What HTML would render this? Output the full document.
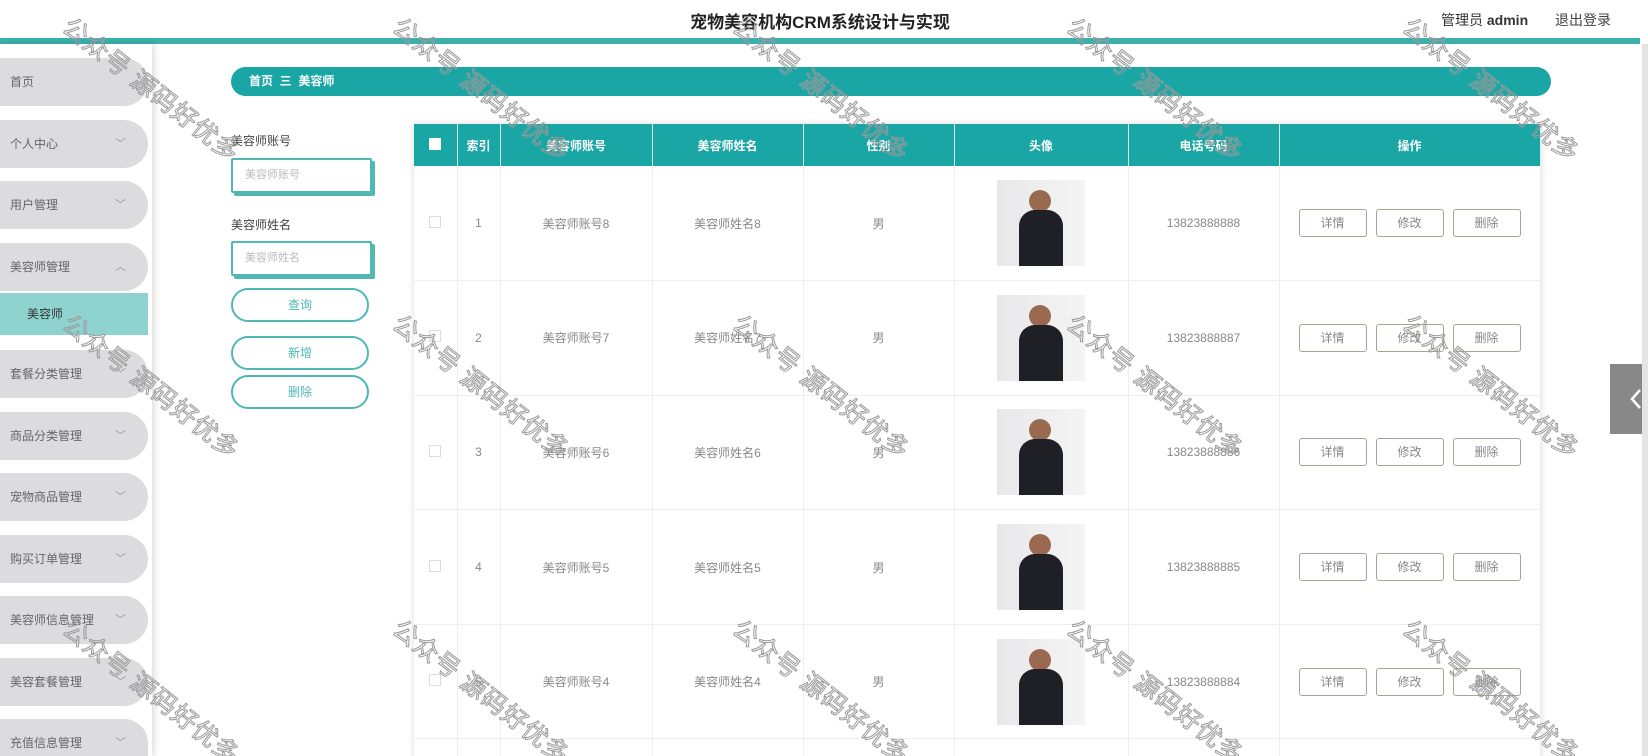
<!DOCTYPE html><html><head><meta charset="utf-8"><style>
*{margin:0;padding:0;box-sizing:border-box}
html,body{width:1648px;height:756px;overflow:hidden}
body{background:#fff;font-family:"Liberation Sans","Noto Sans CJK SC",sans-serif;color:#555}
#w{position:relative;width:1648px;height:756px;overflow:hidden}
.a{position:absolute}
.title{left:0;width:1640px;top:8px;text-align:center;font-size:17px;font-weight:bold;color:#222}
.bar{left:0;top:38px;width:1640px;height:6px;background:#3bb0ac}
.side{left:0;top:44px;width:152px;height:712px;background:#fff;box-shadow:3px 0 6px rgba(0,0,0,.12)}
.it{left:0;width:148px;height:48px;background:#dcdbdd;border-radius:0 24px 24px 0;font-size:12px;color:#666;padding-left:10px;line-height:48px}
.it i{position:absolute;right:22px;top:0;font-style:normal;font-size:11px;color:#999}
.sub{left:0;top:293px;width:148px;height:42px;background:#8fd3d0;font-size:12px;color:#333;padding-left:27px;line-height:42px}
.crumb{left:231px;top:67px;width:1320px;height:29px;background:#1aa6a5;border-radius:15px;color:#fff;font-size:12px;font-weight:bold;padding-left:18px;line-height:29px}
.lbl{left:231px;font-size:12px;color:#444}
.inp{left:231px;width:141px;height:35px;border:2px solid #4fb8b3;box-shadow:3px 3px 0 #4fb8b3;border-radius:2px;font-size:11px;color:#bbb;padding-left:12px;line-height:31px}
.btn{left:231px;width:138px;height:34px;border:2px solid #4fb8b3;border-radius:17px;text-align:center;font-size:12px;color:#4fb8b3;line-height:30px}
.tw{position:absolute;left:408px;top:118px;width:1140px;height:638px;overflow:hidden}
table{position:absolute;left:6px;top:6px;width:1126px;border-collapse:collapse;box-shadow:0 0 6px rgba(0,0,0,.15);table-layout:fixed}
th{background:#1aa6a5;color:#fff;font-size:12px;height:42px;border-right:1px solid #d6f0ee}
td{height:114.6px;text-align:center;font-size:12px;color:#888;border-right:1px solid #eee;border-bottom:1px solid #eee}
.cb{display:inline-block;width:12px;height:12px;border:1px solid #ddd;background:#fff}
th .cb{border:none}
.ph{display:inline-block;width:88px;height:86px;background:linear-gradient(90deg,#e8e8ea,#f4f4f4);position:relative;vertical-align:middle;overflow:hidden}
.ph:before{content:"";position:absolute;left:32px;top:10px;width:22px;height:22px;border-radius:50%;background:#9a6a50}
.ph:after{content:"";position:absolute;left:22px;top:30px;width:44px;height:60px;border-radius:16px 16px 0 0;background:#1f1f26}
.ob{display:inline-block;width:68px;height:28px;border:1px solid #a9a48f;border-radius:3px;line-height:26px;color:#888;margin:0 4.5px;font-size:12px}
.wm{font-size:25px;color:transparent;-webkit-text-stroke:1px #9a9a9a;transform:rotate(38deg);transform-origin:0 0;white-space:nowrap;letter-spacing:1px}
.tab{left:1610px;top:364px;width:38px;height:70px;background:#888}
</style></head><body><div id="w">
<div class="a title">宠物美容机构CRM系统设计与实现</div>
<div class="a" style="left:1441px;top:10px;font-size:14px;color:#333">管理员 <b>admin</b></div>
<div class="a" style="left:1555px;top:10px;font-size:14px;color:#444">退出登录</div>
<div class="a bar"></div>
<div class="a side"></div>
<div class="a it" style="top:58px">首页</div>
<div class="a it" style="top:120px">个人中心<i>﹀</i></div>
<div class="a it" style="top:181px">用户管理<i>﹀</i></div>
<div class="a it" style="top:243px">美容师管理<i>︿</i></div>
<div class="a sub">美容师</div>
<div class="a it" style="top:350px">套餐分类管理<i>﹀</i></div>
<div class="a it" style="top:412px">商品分类管理<i>﹀</i></div>
<div class="a it" style="top:473px">宠物商品管理<i>﹀</i></div>
<div class="a it" style="top:535px">购买订单管理<i>﹀</i></div>
<div class="a it" style="top:596px">美容师信息管理<i>﹀</i></div>
<div class="a it" style="top:658px">美容套餐管理<i>﹀</i></div>
<div class="a it" style="top:719px;height:37px;border-radius:0 24px 0 0">充值信息管理<i>﹀</i></div>
<div class="a crumb">首页 &nbsp;三&nbsp; 美容师</div>
<div class="a lbl" style="top:132px">美容师账号</div>
<div class="a inp" style="top:158px">美容师账号</div>
<div class="a lbl" style="top:216px">美容师姓名</div>
<div class="a inp" style="top:241px">美容师姓名</div>
<div class="a btn" style="top:288px">查询</div>
<div class="a btn" style="top:336px">新增</div>
<div class="a btn" style="top:375px">删除</div>
<div class="tw"><table>
<colgroup><col style="width:43px"><col style="width:43px"><col style="width:152px"><col style="width:151px"><col style="width:151px"><col style="width:174px"><col style="width:151px"><col style="width:261px"></colgroup>
<tr><th><span class="cb"></span></th><th>索引</th><th>美容师账号</th><th>美容师姓名</th><th>性别</th><th>头像</th><th>电话号码</th><th>操作</th></tr>
<tr><td><span class="cb"></span></td><td>1</td><td>美容师账号8</td><td>美容师姓名8</td><td>男</td><td><span class="ph"></span></td><td>13823888888</td><td><span class="ob">详情</span><span class="ob">修改</span><span class="ob">删除</span></td></tr>
<tr><td><span class="cb"></span></td><td>2</td><td>美容师账号7</td><td>美容师姓名7</td><td>男</td><td><span class="ph"></span></td><td>13823888887</td><td><span class="ob">详情</span><span class="ob">修改</span><span class="ob">删除</span></td></tr>
<tr><td><span class="cb"></span></td><td>3</td><td>美容师账号6</td><td>美容师姓名6</td><td>男</td><td><span class="ph"></span></td><td>13823888886</td><td><span class="ob">详情</span><span class="ob">修改</span><span class="ob">删除</span></td></tr>
<tr><td><span class="cb"></span></td><td>4</td><td>美容师账号5</td><td>美容师姓名5</td><td>男</td><td><span class="ph"></span></td><td>13823888885</td><td><span class="ob">详情</span><span class="ob">修改</span><span class="ob">删除</span></td></tr>
<tr><td><span class="cb"></span></td><td>5</td><td>美容师账号4</td><td>美容师姓名4</td><td>男</td><td><span class="ph"></span></td><td>13823888884</td><td><span class="ob">详情</span><span class="ob">修改</span><span class="ob">删除</span></td></tr>
<tr><td></td><td></td><td></td><td></td><td></td><td><span class="ph" style="vertical-align:top;margin-top:10px"></span></td><td></td><td></td></tr>
</table></div>
<div class="a tab"><svg width="38" height="70"><path d="M30 26 L22 35 L30 44" stroke="#fff" stroke-width="2.5" fill="none"/></svg></div>
<div class="a" style="left:1642px;top:44px;width:6px;height:712px;background:#e4e4e4"></div>
<div class="a wm" style="left:78px;top:8px">公众号 源码好优多</div>
<div class="a wm" style="left:408px;top:8px">公众号 源码好优多</div>
<div class="a wm" style="left:748px;top:8px">公众号 源码好优多</div>
<div class="a wm" style="left:1082px;top:8px">公众号 源码好优多</div>
<div class="a wm" style="left:1418px;top:8px">公众号 源码好优多</div>
<div class="a wm" style="left:78px;top:305px">公众号 源码好优多</div>
<div class="a wm" style="left:408px;top:305px">公众号 源码好优多</div>
<div class="a wm" style="left:748px;top:305px">公众号 源码好优多</div>
<div class="a wm" style="left:1082px;top:305px">公众号 源码好优多</div>
<div class="a wm" style="left:1418px;top:305px">公众号 源码好优多</div>
<div class="a wm" style="left:78px;top:610px">公众号 源码好优多</div>
<div class="a wm" style="left:408px;top:610px">公众号 源码好优多</div>
<div class="a wm" style="left:748px;top:610px">公众号 源码好优多</div>
<div class="a wm" style="left:1082px;top:610px">公众号 源码好优多</div>
<div class="a wm" style="left:1418px;top:610px">公众号 源码好优多</div>
</div></body></html>
